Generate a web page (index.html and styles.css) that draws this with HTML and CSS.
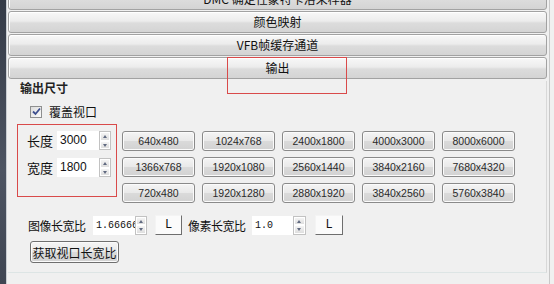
FILE: index.html
```html
<!DOCTYPE html>
<html lang="zh-CN">
<head>
    <meta charset="UTF-8">
    <meta name="viewport" content="width=device-width, initial-scale=1.0">
    <title>输出</title>
    <link rel="stylesheet" href="styles.css">
</head>
<body>
    <div class="app">
        <div class="strip"></div>
        <div class="panel">
            <div class="rollouts">
                <div class="bar">DMC 确定性蒙特卡洛采样器</div>
                <div class="bar">颜色映射</div>
                <div class="bar">VFB帧缓存通道</div>
                <div class="bar">输出</div>
            </div>

            <div class="section">
                <div class="group-title">输出尺寸</div>

                <div class="check-row">
                    <span class="check">
                        <svg width="9" height="9" viewBox="0 0 9 9"><path d="M1 4.5 L3.5 7 L8 1.5" fill="none" stroke="#3d4f8f" stroke-width="1.8"/></svg>
                    </span>
                    <span>覆盖视口</span>
                </div>

                <div class="size-area">
                    <div class="size-box">
                        <div class="field-row">
                            <span class="field-label">长度</span>
                            <span class="input">3000</span>
                            <span class="spin"><i class="up"></i><i class="down"></i></span>
                        </div>
                        <div class="field-row">
                            <span class="field-label">宽度</span>
                            <span class="input">1800</span>
                            <span class="spin"><i class="up"></i><i class="down"></i></span>
                        </div>
                    </div>

                    <div class="presets">
                        <button class="preset">640x480</button>
                        <button class="preset">1024x768</button>
                        <button class="preset">2400x1800</button>
                        <button class="preset">4000x3000</button>
                        <button class="preset">8000x6000</button>
                        <button class="preset">1366x768</button>
                        <button class="preset">1920x1080</button>
                        <button class="preset">2560x1440</button>
                        <button class="preset">3840x2160</button>
                        <button class="preset">7680x4320</button>
                        <button class="preset">720x480</button>
                        <button class="preset">1920x1280</button>
                        <button class="preset">2880x1920</button>
                        <button class="preset">3840x2560</button>
                        <button class="preset">5760x3840</button>
                    </div>
                </div>

                <div class="ratio-row">
                    <span class="ratio-label">图像长宽比</span>
                    <span class="input mono img-ratio">1.66666</span>
                    <span class="spin"><i class="up"></i><i class="down"></i></span>
                    <button class="lock">L</button>
                    <span class="ratio-label pix">像素长宽比</span>
                    <span class="input mono pix-ratio">1.0</span>
                    <span class="spin"><i class="up"></i><i class="down"></i></span>
                    <button class="lock">L</button>
                </div>

                <button class="get-btn">获取视口长宽比</button>
            </div>
        </div>
    </div>

    <!-- red annotation over the rollout -->
    <div class="mark"></div>
</body>
</html>
```

FILE: styles.css
```css
* {
    box-sizing: border-box;
}
body {
    margin: 0;
    width: 554px;
    height: 284px;
    overflow: hidden;
    background: #f0f0f0;
    font-family: "Noto Sans CJK SC", sans-serif;
    font-size: 12px;
    color: #111;
}
.app {
    display: flex;
    height: 284px;
}
.strip {
    width: 7px;
    background: linear-gradient(#353b47, #4d5462 60%, #3f4552);
    border-right: 1px solid #c9cdd2;
}
.panel {
    width: 543px;
    padding: 0 2px 0 1px;
    border-right: 1px solid #c8c8c8;
}
.rollouts {
    margin-top: -12px;
}
.bar {
    height: 22px;
    margin-bottom: 1px;
    border: 1px solid #a2a2a2;
    border-radius: 3px;
    background: linear-gradient(#f8f8f8, #ececec 45%, #dcdcdc 55%, #d4d4d4);
    box-shadow: inset 1px 1px 0 #fff;
    text-align: center;
    line-height: 19px;
}
.section {
    padding: 0 0 9px 0;
    border-right: 1px solid #d8d8d8;
    border-bottom: 1px solid #dde5e5;
}
.group-title {
    margin: 2px 0 0 12px;
    height: 14px;
    line-height: 14px;
    font-weight: bold;
    color: #222;
}
.check-row {
    display: flex;
    align-items: center;
    margin: 10px 0 0 22px;
    height: 13px;
    gap: 7px;
}
.check {
    width: 12px;
    height: 12px;
    border: 1px solid #8e8f8f;
    background: linear-gradient(135deg, #dcdcdc, #fbfbfb);
    display: flex;
    align-items: center;
    justify-content: center;
}
.size-area {
    display: flex;
    align-items: flex-start;
    margin: 6px 0 0 9px;
    height: 79px;
}
.size-box {
    width: 100px;
    height: 73px;
    border: 1px solid #d94a4a;
    padding: 6px 0 0 9px;
    display: flex;
    flex-direction: column;
    gap: 8px;
}
.field-row {
    display: flex;
    align-items: center;
    height: 19px;
}
.field-label {
    width: 30px;
    font-size: 13px;
}
.input {
    width: 42px;
    height: 19px;
    background: #fff;
    font-family: "Liberation Sans", sans-serif;
    font-size: 12px;
    line-height: 19px;
    padding-left: 3px;
    overflow: hidden;
    white-space: nowrap;
}
.mono {
    font-family: "Liberation Mono", monospace;
    font-size: 10px;
}
.spin {
    width: 12px;
    height: 19px;
    display: flex;
    flex-direction: column;
    border: 1px solid #c2c2c2;
    background: #fff;
}
.spin i {
    flex: 1;
    position: relative;
    background: linear-gradient(#f4f4f4, #dedede);
    border: 1px solid #fff;
}
.spin i::after {
    content: "";
    position: absolute;
    left: 2px;
    width: 0;
    height: 0;
    border-left: 2.5px solid transparent;
    border-right: 2.5px solid transparent;
}
.spin .up::after {
    top: 2px;
    border-bottom: 3px solid #606a80;
}
.spin .down::after {
    top: 2px;
    border-top: 3px solid #606a80;
}
.presets {
    display: grid;
    grid-template-columns: repeat(5, 73px);
    grid-auto-rows: 20px;
    column-gap: 7px;
    row-gap: 6px;
    margin: 7px 0 0 5px;
}
.preset,
.get-btn {
    border: 1px solid #8a8a8a;
    border-radius: 3px;
    background: linear-gradient(#f5f5f5, #e9e9e9 48%, #dadada 52%, #d2d2d2);
    box-shadow: inset 0 0 0 1px #fbfbfb;
    padding: 0;
    color: #2a2a2a;
    font-family: "Liberation Sans", sans-serif;
    font-size: 10.5px;
    cursor: pointer;
}
.ratio-row {
    display: flex;
    align-items: center;
    height: 20px;
    margin: 12px 0 0 20px;
}
.ratio-label {
    width: 60px;
    font-size: 12px;
    letter-spacing: -0.5px;
}
.img-ratio {
    margin-left: 5px;
    width: 42px;
}
.pix {
    margin-left: 6px;
}
.pix-ratio {
    margin-left: 4px;
    width: 41px;
}
.lock {
    width: 27px;
    height: 20px;
    margin-left: 8px;
    padding: 0;
    background: #fbfbfb;
    border: 1px solid #f4f4f4;
    border-right-color: #6e6e6e;
    border-bottom-color: #6e6e6e;
    font-family: "Liberation Mono", monospace;
    font-size: 12px;
    color: #111;
}
.pix-ratio + .spin {
    width: 13px;
}
.pix-ratio + .spin + .lock {
    margin-left: 9px;
    width: 28px;
}
.get-btn {
    display: block;
    width: 89px;
    height: 22px;
    margin: 6px 0 0 22px;
    border-color: #6f6f6f;
    font-family: "Noto Sans CJK SC", sans-serif;
    font-size: 12px;
    color: #111;
}
.mark {
    position: absolute;
    left: 227px;
    top: 57px;
    width: 120px;
    height: 37px;
    border: 1px solid #d94a4a;
}
```
